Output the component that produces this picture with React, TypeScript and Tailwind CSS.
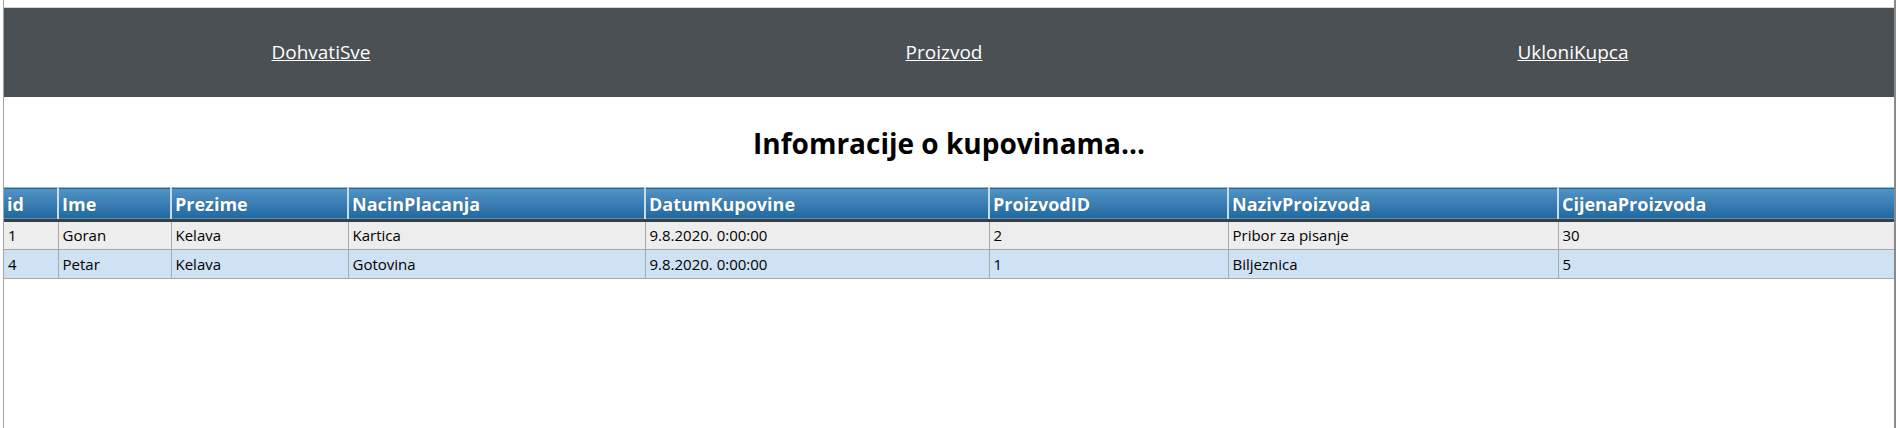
import React from "react";

const cols = [
  { name: "id", w: "w-[54px]" },
  { name: "Ime", w: "w-[113px]" },
  { name: "Prezime", w: "w-[177px]" },
  { name: "NacinPlacanja", w: "w-[297px]" },
  { name: "DatumKupovine", w: "w-[344px]" },
  { name: "ProizvodID", w: "w-[239px]" },
  { name: "NazivProizvoda", w: "w-[330px]" },
  { name: "CijenaProizvoda", w: "w-[336px]" },
];

const rows = [
  ["1", "Goran", "Kelava", "Kartica", "9.8.2020. 0:00:00", "2", "Pribor za pisanje", "30"],
  ["4", "Petar", "Kelava", "Gotovina", "9.8.2020. 0:00:00", "1", "Biljeznica", "5"],
];

export default function App() {
  return (
    <div className="bg-white h-[428px] w-[1896px] overflow-hidden" style={{ fontFamily: '"Open Sans", "Noto Sans", sans-serif' }}>
      <div className="ml-[3px] w-[1893px] h-[428px] border-l border-r-2 border-l-[#a3a3a3] border-r-[#8a8a8a] pt-[7px]">
        <div className="border-t border-[#d4d4d4]">
          <nav className="h-[89px] bg-[#4b5055] grid grid-cols-3 items-center">
            <div className="text-center pl-[4px]">
              <a href="#" className="text-white underline text-[19px]">DohvatiSve</a>
            </div>
            <div className="text-center pr-[10px]">
              <a href="#" className="text-white underline text-[19px]">Proizvod</a>
            </div>
            <div className="text-center pr-[12px]">
              <a href="#" className="text-white underline text-[19px]">UkloniKupca</a>
            </div>
          </nav>
          <div className="h-[90px] flex items-center justify-center pt-[2px]">
            <h1 className="text-[28px] font-bold text-black">Infomracije o kupovinama...</h1>
          </div>
          <table className="table-fixed w-[1890px] border-collapse">
            <thead>
              <tr className="bg-gradient-to-b from-[#5393c3] to-[#1f69a2] border-t border-[#9fb8cc] border-b-[3px] border-b-[#3c3f42]">
                {cols.map((c, i) => (
                  <th
                    key={c.name}
                    className={`${c.w} h-[33px] text-left pl-[3px] text-white font-bold text-[18px] leading-none ${i > 0 ? "border-l-2 border-l-[#c8dced]" : ""}`}
                    style={{ textShadow: "0 0 1px rgba(0,0,0,0.3)" }}
                  >
                    {c.name}
                  </th>
                ))}
              </tr>
            </thead>
            <tbody>
              {rows.map((r, ri) => (
                <tr key={ri} className={`${ri === 0 ? "bg-[#ededed]" : "bg-[#cfe2f3]"} border-b border-[#a9a9a9]`}>
                  {r.map((v, ci) => (
                    <td
                      key={ci}
                      className={`h-[29px] pl-[4px] text-[15px] text-black ${ci > 0 ? "border-l border-l-[#a9a9a9]" : ""}`}
                    >
                      {v}
                    </td>
                  ))}
                </tr>
              ))}
            </tbody>
          </table>
        </div>
      </div>
    </div>
  );
}
